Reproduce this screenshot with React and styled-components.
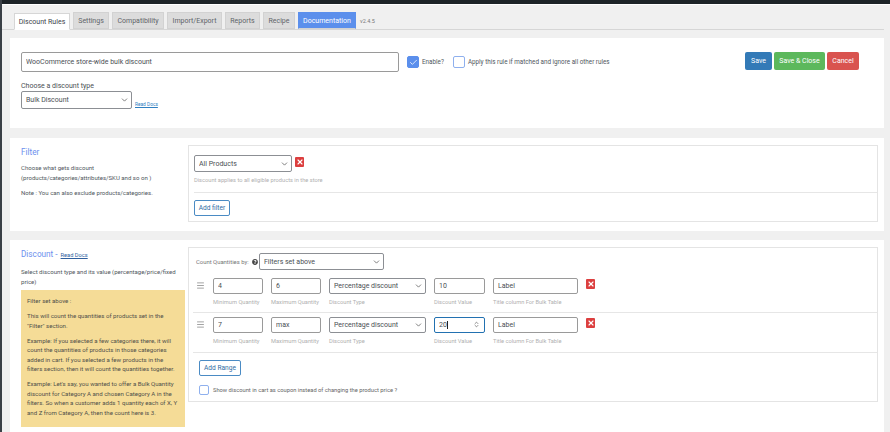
import styled, { createGlobalStyle } from "styled-components";
import { ChevronDown, X, Check, Menu, ChevronsUpDown } from "lucide-react";
import { FaQuestionCircle } from "react-icons/fa";

const Global = createGlobalStyle`
  html, body {
    margin: 0;
    height: 432px;
    overflow: hidden;
    background: #f0f0f0;
  }
  body, input, select, button {
    font-family: Roboto, "Liberation Sans", sans-serif;
    color: #4a4f54;
  }
`;

const Page = styled.div`
  width: 890px;
  height: 432px;
  overflow: hidden;
  border-left: 2px solid #3a4046;
  box-sizing: border-box;
`;

const TopBar = styled.div`
  height: 4px;
  background: #1d2327;
  margin-left: -2px;
  border-bottom: 1px solid #fff;
`;

const Tabs = styled.div`
  display: flex;
  align-items: flex-end;
  gap: 3px;
  height: 24px;
  margin: 0 6px 0 0;
  padding-left: 12px;
  border-bottom: 1px solid #d6d6d6;
`;

const Tab = styled.div`
  height: 17px;
  width: ${(p) => p.$w}px;
  margin-bottom: ${(p) => (p.$active ? "-1px" : "0")};
  display: flex;
  align-items: center;
  justify-content: center;
  font-size: 7px;
  font-weight: 400;
  box-sizing: border-box;
  background: ${(p) => (p.$active ? "#fff" : p.$doc ? "#5b8fec" : "#dcdcdc")};
  color: ${(p) => (p.$active ? "#3c434a" : p.$doc ? "#fff" : "#5f6468")};
  border: 1px solid ${(p) => (p.$active ? "#d6d6d6" : p.$doc ? "#5b8fec" : "#d2d2d2")};
  border-bottom-color: ${(p) => (p.$active ? "#fff" : "#d2d2d2")};
`;

const Version = styled.span`
  font-size: 5.5px;
  color: #777;
  align-self: center;
  margin: 8px 0 0 1px;
`;

const Card = styled.section`
  background: #fff;
  margin: ${(p) => p.$top}px 6px 0 8px;
  height: ${(p) => p.$h}px;
  box-sizing: border-box;
`;

const RuleCard = styled(Card)`
  padding: 14px 25px 0 11px;
`;

const NameRow = styled.div`
  display: flex;
  align-items: flex-start;
`;

const NameInput = styled.input`
  display: block;
  width: 378px;
  height: 20px;
  box-sizing: border-box;
  border: 1px solid #9a9a9a;
  border-radius: 2px;
  padding: 0 4px;
  font-size: 7px;
  outline: none;
`;

const CheckLabel = styled.label`
  display: flex;
  align-items: center;
  gap: 3px;
  font-size: 6.3px;
  color: #50575e;
  height: 20px;
  margin-left: ${(p) => p.$ml}px;
`;

const Box = styled.span`
  width: ${(p) => p.$size || 12}px;
  height: ${(p) => p.$size || 12}px;
  box-sizing: border-box;
  border-radius: 2px;
  display: flex;
  align-items: center;
  justify-content: center;
  background: ${(p) => (p.$on ? "#5b8fec" : "#fff")};
  border: 1px solid ${(p) => (p.$on ? "#5b8fec" : "#8fb0ee")};
  color: #fff;
`;

const Actions = styled.div`
  display: flex;
  gap: 2px;
  margin-left: auto;
`;

const Action = styled.button`
  height: 18px;
  padding: 0;
  width: ${(p) => p.$w}px;
  border: none;
  border-radius: 2px;
  color: #fff;
  font-size: 7px;
  font-weight: 400;
  background: ${(p) => p.$bg};
`;

const FieldLabel = styled.div`
  font-size: 7px;
  margin-top: 9px;
  line-height: 10px;
`;

const TypeRow = styled.div`
  display: flex;
  align-items: flex-end;
  gap: 3px;
`;

const SmallLink = styled.a`
  font-size: ${(p) => p.$size || 4.8}px;
  color: ${(p) => p.$color || "#2f7fc1"};
  text-decoration: underline;
  margin-bottom: 2px;
`;

const SelectWrap = styled.div`
  position: relative;
  width: ${(p) => p.$w}px;
  height: ${(p) => p.$h || 18}px;
  flex: none;
  svg {
    position: absolute;
    right: 3px;
    top: 50%;
    transform: translateY(-50%);
    pointer-events: none;
    color: #444;
  }
`;

const SelectBox = styled.select`
  display: block;
  appearance: none;
  width: 100%;
  height: 100%;
  box-sizing: border-box;
  background: #fff;
  border: 1px solid #8c8f94;
  border-radius: 2px;
  padding: 0 4px;
  font-size: 7px;
  outline: none;
`;

const Columns = styled(Card)`
  display: grid;
  grid-template-columns: 178px 690px;
  padding: 7px 0 0 0;
`;

const Side = styled.div`
  padding: 0 0 0 11px;
`;

const Heading = styled.h2`
  margin: 0;
  font-size: 8.2px;
  font-weight: 400;
  line-height: 14px;
  color: #6b8fee;
  display: flex;
  align-items: baseline;
  gap: 3px;
`;

const SideText = styled.p`
  margin: ${(p) => p.$mt ?? 3}px 0 0;
  font-size: 6.05px;
  line-height: 9.6px;
  color: #50575e;
  width: ${(p) => p.$w || 160}px;
`;

const Panel = styled.div`
  border: 1px solid #e4e4e4;
  box-sizing: border-box;
  height: ${(p) => p.$h}px;
`;

const FilterPanel = styled(Panel)`
  padding: 9px 0 0 5px;
`;

const FilterRow = styled.div`
  display: flex;
  align-items: flex-start;
  gap: 3px;
`;

const RemoveBtn = styled.span`
  width: 9px;
  height: 10px;
  margin-top: 2px;
  flex: none;
  border-radius: 1px;
  background: #dc3f3f;
  color: #fff;
  display: flex;
  align-items: center;
  justify-content: center;
`;

const Hint = styled.div`
  font-size: 5.7px;
  color: #b0b0b0;
  line-height: 8px;
  white-space: nowrap;
`;

const FilterHint = styled(Hint)`
  margin-top: 4px;
`;

const Rule = styled.hr`
  border: none;
  border-top: 1px solid #e6e6e6;
  margin: ${(p) => p.$m};
`;

const OutlineBtn = styled.button`
  display: block;
  height: 16px;
  width: ${(p) => p.$w}px;
  padding: 0;
  background: #fff;
  border: 1px solid #4a8bc4;
  border-radius: 2px;
  font-size: 6.6px;
  font-weight: 400;
  color: #2e6da4;
`;

const Note = styled.div`
  background: #f5dc97;
  margin-top: 4px;
  width: 164px;
  height: 137px;
  box-sizing: border-box;
  padding: 6px 7px 0 6px;
  font-size: 6.1px;
  line-height: 9.5px;
  color: #50504a;
  p {
    margin: 0 0 5.5px;
  }
`;

const DiscountPanel = styled(Panel)`
  padding: 5px 0 0 0;
`;

const CountRow = styled.div`
  display: flex;
  align-items: center;
  padding-left: 7px;
  margin-bottom: 8px;
`;

const CountLabel = styled.span`
  font-size: 5.9px;
  color: #777;
  display: flex;
  align-items: center;
  gap: 3px;
  width: 63px;
  svg {
    color: #444;
  }
`;

const RangeRow = styled.div`
  display: grid;
  grid-template-columns: 50px 50px 97px 51px 85px 10px;
  column-gap: 8px;
  padding-left: 24px;
  position: relative;
  align-items: start;
`;

const Handle = styled.span`
  position: absolute;
  left: 7px;
  top: 3px;
  color: #666;
  display: flex;
`;

const Field = styled.div`
  display: flex;
  flex-direction: column;
  gap: 4px;
`;

const NumberBox = styled.div`
  position: relative;
  height: 16px;
  svg {
    position: absolute;
    right: 5px;
    top: 4px;
    color: #444;
  }
`;

const Caret = styled.span`
  position: absolute;
  left: 13px;
  top: 4px;
  width: 1px;
  height: 8px;
  background: #222;
`;

const TextBox = styled.input`
  display: block;
  width: 100%;
  height: 100%;
  box-sizing: border-box;
  border: 1px solid ${(p) => (p.$focus ? "#2271b1" : "#9a9a9a")};
  border-radius: 2px;
  padding: 0 4px;
  font-size: 7px;
  outline: none;
`;

const RowClose = styled(RemoveBtn)`
  margin-top: 1px;
`;

const Footer = styled.div`
  padding: 0 0 0 10px;
`;

const CouponRow = styled.label`
  display: flex;
  align-items: center;
  gap: 4px;
  margin-top: 9px;
  font-size: 5.75px;
  color: #666;
`;

const ranges = [
  { min: "4", max: "6", value: "10" },
  { min: "7", max: "max", value: "20", focus: true },
];

function Select({ w, h, value }) {
  return (
    <SelectWrap $w={w} $h={h}>
      <SelectBox defaultValue={value}>
        <option>{value}</option>
      </SelectBox>
      <ChevronDown size={9} strokeWidth={1.8} />
    </SelectWrap>
  );
}

function Remove({ as: Comp = RemoveBtn }) {
  return (
    <Comp>
      <X size={8} strokeWidth={3.5} />
    </Comp>
  );
}

function Range({ min, max, value, focus }) {
  return (
    <RangeRow>
      <Handle>
        <Menu size={9} strokeWidth={1.6} />
      </Handle>
      <Field>
        <NumberBox><TextBox defaultValue={min} /></NumberBox>
        <Hint>Minimum Quantity</Hint>
      </Field>
      <Field>
        <NumberBox><TextBox defaultValue={max} /></NumberBox>
        <Hint>Maximum Quantity</Hint>
      </Field>
      <Field>
        <Select w={97} h={16} value="Percentage discount" />
        <Hint>Discount Type</Hint>
      </Field>
      <Field>
        <NumberBox>
          <TextBox defaultValue={value} $focus={focus} />
          {focus && <Caret />}
          {focus && <ChevronsUpDown size={7} strokeWidth={2} />}
        </NumberBox>
        <Hint>Discount Value</Hint>
      </Field>
      <Field>
        <NumberBox><TextBox defaultValue="Label" /></NumberBox>
        <Hint>Title column For Bulk Table</Hint>
      </Field>
      <Remove as={RowClose} />
    </RangeRow>
  );
}

export default function App() {
  return (
    <Page>
      <Global />
      <TopBar />
      <Tabs>
        <Tab $active $w={56}>Discount Rules</Tab>
        <Tab $w={36}>Settings</Tab>
        <Tab $w={52}>Compatibility</Tab>
        <Tab $w={55}>Import/Export</Tab>
        <Tab $w={35}>Reports</Tab>
        <Tab $w={32}>Recipe</Tab>
        <Tab $doc $w={58}>Documentation</Tab>
        <Version>v2.4.5</Version>
      </Tabs>

      <RuleCard $top={8} $h={90}>
        <NameRow>
          <NameInput defaultValue="WooCommerce store-wide bulk discount" />
          <CheckLabel $ml={8}>
            <Box $on><Check size={9} strokeWidth={2} /></Box>
            Enable?
          </CheckLabel>
          <CheckLabel $ml={9}>
            <Box />
            Apply this rule if matched and ignore all other rules
          </CheckLabel>
          <Actions>
            <Action $w={27} $bg="#337ab7">Save</Action>
            <Action $w={51} $bg="#5cb85c">Save &amp; Close</Action>
            <Action $w={32} $bg="#d9534f">Cancel</Action>
          </Actions>
        </NameRow>
        <FieldLabel>Choose a discount type</FieldLabel>
        <TypeRow>
          <Select w={111} value="Bulk Discount" />
          <SmallLink>Read Docs</SmallLink>
        </TypeRow>
      </RuleCard>

      <Columns $top={10} $h={93}>
        <Side>
          <Heading>Filter</Heading>
          <SideText $mt={4} $w={150}>
            Choose what gets discount
            (products/categories/attributes/SKU and so on )
          </SideText>
          <SideText $mt={6}>Note : You can also exclude products/categories.</SideText>
        </Side>
        <FilterPanel $h={77}>
          <FilterRow>
            <Select w={98} h={17} value="All Products" />
            <Remove />
          </FilterRow>
          <FilterHint>Discount applies to all eligible products in the store</FilterHint>
          <Rule $m="8px 0 7px" />
          <OutlineBtn $w={36}>Add filter</OutlineBtn>
        </FilterPanel>
      </Columns>

      <Columns $top={9} $h={192}>
        <Side>
          <Heading>
            Discount -
            <SmallLink $size={5.7} $color="#2f5f9e">Read Docs</SmallLink>
          </Heading>
          <SideText $w={163}>
            Select discount type and its value (percentage/price/fixed price)
          </SideText>
          <Note>
            <p>Filter set above :</p>
            <p>This will count the quantities of products set in the "Filter" section.</p>
            <p>
              Example: If you selected a few categories there, it will count the
              quantities of products in those categories added in cart. If you
              selected a few products in the filters section, then it will count
              the quantities together.
            </p>
            <p>
              Example: Let's say, you wanted to offer a Bulk Quantity discount for
              Category A and chosen Category A in the filters. So when a customer
              adds 1 quantity each of X, Y and Z from Category A, then the count
              here is 3.
            </p>
          </Note>
        </Side>
        <DiscountPanel $h={155}>
          <CountRow>
            <CountLabel>
              Count Quantities by:
              <FaQuestionCircle size={6} />
            </CountLabel>
            <Select w={125} h={17} value="Filters set above" />
          </CountRow>
          <Range {...ranges[0]} />
          <Rule $m="6px 0 4px 4px" />
          <Range {...ranges[1]} />
          <Rule $m="7px 0 7px 4px" />
          <Footer>
            <OutlineBtn $w={42}>Add Range</OutlineBtn>
            <CouponRow>
              <Box $size={10} />
              Show discount in cart as coupon instead of changing the product price ?
            </CouponRow>
          </Footer>
        </DiscountPanel>
      </Columns>
    </Page>
  );
}
